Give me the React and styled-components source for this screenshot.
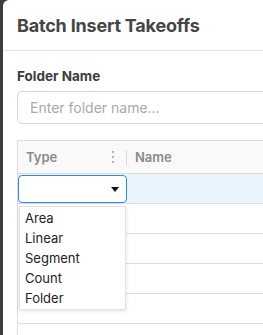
import React from "react";
import styled, { createGlobalStyle } from "styled-components";

const Global = createGlobalStyle`
  html, body { margin: 0; padding: 0; }
  body {
    background: #3d3d3d;
    overflow: hidden;
    font-family: Inter, "Noto Sans", "Liberation Sans", sans-serif;
  }
`;

const Backdrop = styled.div`
  display: flex;
  padding-left: 3px;
  width: 263px;
  height: 335px;
  box-sizing: border-box;
  overflow: hidden;
`;

const Modal = styled.div`
  flex: none;
  width: 420px;
  height: 400px;
  background: #fff;
  border-radius: 6px 0 0 0;
`;

const Header = styled.div`
  height: 51px;
  box-sizing: border-box;
  padding: 0 14px;
  display: flex;
  align-items: center;
  border-bottom: 1px solid #e4e4e4;
`;

const Title = styled.h2`
  margin: 0;
  font-size: 18px;
  font-weight: 700;
  color: #454545;
  letter-spacing: -0.2px;
`;

const Body = styled.div`
  padding: 15px 14px;
  display: flex;
  flex-direction: column;
`;

const Label = styled.label`
  font-size: 13.5px;
  font-weight: 700;
  color: #3c3c3c;
  line-height: 20px;
  margin-bottom: 5px;
`;

const Input = styled.input`
  height: 33px;
  box-sizing: border-box;
  border: 1px solid #d4d4d4;
  border-radius: 5px;
  padding: 0 12px;
  font-family: inherit;
  font-size: 14px;
  color: #333;
  &::placeholder { color: #a9a9a9; }
`;

const Grid = styled.div`
  margin-top: 16px;
  border: 1px solid #dddddd;
  border-right: none;
  border-bottom: none;
  position: relative;
`;

const HeaderRow = styled.div`
  display: flex;
  height: 32px;
  background: #f9f9f9;
  border-bottom: 1px solid #dcdcdc;
`;

const HeaderCell = styled.div`
  width: ${(p) => p.$w}px;
  box-sizing: border-box;
  padding: 0 8px;
  display: flex;
  align-items: center;
  position: relative;
  font-size: 13px;
  font-weight: 600;
  color: #8a8a8a;
`;

const HeaderText = styled.span`
  flex: 1;
`;

const Dots = styled.span`
  display: flex;
  flex-direction: column;
  gap: 2.5px;
  margin-right: 5px;
  & > i {
    width: 2.5px;
    height: 2.5px;
    border-radius: 50%;
    background: #999;
  }
`;

const Sep = styled.span`
  position: absolute;
  right: 0;
  top: 9px;
  height: 15px;
  width: 1px;
  background: #d8d8d8;
`;

const Row = styled.div`
  display: flex;
  height: 30px;
  box-sizing: border-box;
  border-bottom: 1px solid #dedede;
  background: ${(p) => (p.$selected ? "#eaf4fd" : "#fff")};
`;

const SelectBox = styled.div`
  width: 109px;
  height: 28px;
  margin-top: 1px;
  box-sizing: border-box;
  border: 1.5px solid #2f8ae2;
  border-radius: 4px;
  background: #fff;
  display: flex;
  align-items: center;
  justify-content: flex-end;
  padding-right: 7px;
`;

const Arrow = styled.span`
  width: 0;
  height: 0;
  border-left: 4.5px solid transparent;
  border-right: 4.5px solid transparent;
  border-top: 5px solid #111;
`;

const Popup = styled.ul`
  position: absolute;
  left: 1px;
  top: 65px;
  width: 107px;
  margin: 0;
  padding: 1px 0;
  list-style: none;
  background: #fff;
  border: 1px solid #e2e2e2;
  box-shadow: 0 1px 4px rgba(0, 0, 0, 0.12);
  box-sizing: border-box;
`;

const Option = styled.li`
  height: 20px;
  line-height: 20px;
  padding-left: 5px;
  font-size: 13px;
  color: #222;
`;

export default function App() {
  const options = ["Area", "Linear", "Segment", "Count", "Folder"];
  return (
    <>
      <Global />
      <Backdrop>
        <Modal>
          <Header>
            <Title>Batch Insert Takeoffs</Title>
          </Header>
          <Body>
            <Label>Folder Name</Label>
            <Input placeholder="Enter folder name..." />
            <Grid>
              <HeaderRow>
                <HeaderCell $w={109}>
                  <HeaderText>Type</HeaderText>
                  <Dots>
                    <i />
                    <i />
                    <i />
                  </Dots>
                  <Sep />
                </HeaderCell>
                <HeaderCell $w={200}>
                  <HeaderText>Name</HeaderText>
                </HeaderCell>
              </HeaderRow>
              <Row $selected>
                <SelectBox>
                  <Arrow />
                </SelectBox>
              </Row>
              <Row />
              <Row />
              <Row />
              <Row />
              <Row />
              <Popup>
                {options.map((o) => (
                  <Option key={o}>{o}</Option>
                ))}
              </Popup>
            </Grid>
          </Body>
        </Modal>
      </Backdrop>
    </>
  );
}
